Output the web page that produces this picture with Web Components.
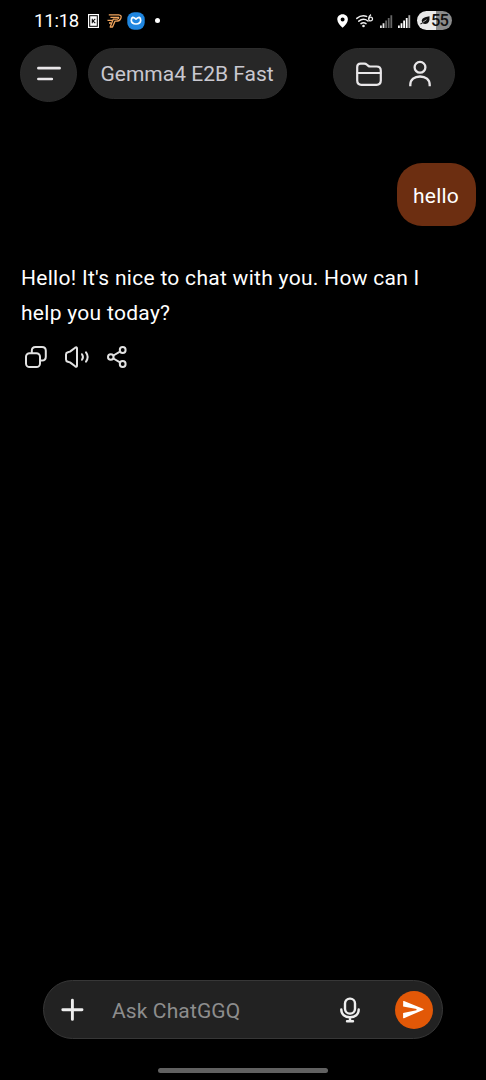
<!DOCTYPE html>
<html lang="en">
<head>
<meta charset="utf-8">
<title>Chat</title>
<style>
html,body{margin:0;background:#000}
body{width:486px;height:1080px;overflow:hidden;font-family:Roboto,"Noto Sans",sans-serif}
</style>
</head>
<body>
<chat-screen></chat-screen>
<script>
const define=(name,html)=>{
  const t=document.createElement('template');
  t.innerHTML=html;
  customElements.define(name,class extends HTMLElement{
    constructor(){super();this.attachShadow({mode:'open'}).append(t.content.cloneNode(true));}
  });
};

// Each icon: [width, height, markup]; colours come from currentColor.
const S='fill="none" stroke="currentColor" stroke-linecap="round" stroke-linejoin="round"';
const ICONS={
  menu:[24,16,`<path ${S} stroke-width="2.7" d="M1.4 2.2H22.6M1.4 13H14.8"/>`],
  folder:[26,24,`<g ${S} stroke-width="2.2"><path d="M1.2 11V5Q1.2 1.6 4.6 1.6H8.2Q9.8 1.6 11 2.7L12 3.6Q13 4.5 14.4 4.5H20.6Q24.8 4.5 24.8 8.7V18.6Q24.8 22.8 20.6 22.8H5.4Q1.2 22.8 1.2 18.6Z"/><path d="M1.5 11H24.5"/></g>`],
  user:[22,26,`<g ${S} stroke-width="2.3"><circle cx="11" cy="6.3" r="5.4"/><path stroke-linecap="butt" d="M1.3 25.3V23.8C1.3 18.7 5.4 15.5 11 15.5S20.7 18.7 20.7 23.8V25.3"/></g>`],
  copy:[22,22,`<g ${S} stroke-width="2"><rect x="1" y="7.2" width="14" height="13.8" rx="3.6"/><path d="M6.8 7V4.8Q6.8 1 10.6 1H17Q20.8 1 20.8 4.8V10.8Q20.8 14.6 17 14.6H15.3"/></g>`],
  sound:[24,22,`<g ${S} stroke-width="2"><path d="M1 8.4Q1 6.6 2.8 6.2L5 5.6 10.2 1.7Q12 .5 12 2.6V19.4Q12 21.5 10.2 20.3L5 16.4 2.8 15.8Q1 15.4 1 13.6Z"/><path d="M17 8.2Q18.9 11 17 13.8M21 6.4Q24.3 11 21 15.6"/></g>`],
  share:[20,22,`<g ${S} stroke-width="2"><circle cx="3.8" cy="11" r="2.8"/><circle cx="15.7" cy="4" r="2.9"/><circle cx="15.7" cy="18" r="2.9"/><path d="M6.4 9.5 13 5.7M6.4 12.5 13 16.3"/></g>`],
  plus:[22,22,`<path ${S} stroke-width="2.9" d="M11.4 1.2V20.4M1.8 10.8H21"/>`],
  mic:[20,26,`<g ${S} stroke-width="2.4"><rect x="5" y="1.6" width="10" height="15" rx="4.8"/><path d="M1.3 12.5C1.3 17.5 5 20.2 10 20.2S18.7 17.5 18.7 12.5M10 20.5V24M7 24.3H13"/></g>`],
  send:[22,20,`<path fill="currentColor" d="M1.2 1.8Q.8.6 2 1L21 8.8Q22.2 9.5 21 10.1L2 18.2Q.8 18.7 1.1 17.4V13L14.5 10.2V8.9L1.1 6.6Z"/>`],
  card:[12,14,`<rect x=".6" y=".6" width="9.8" height="12.8" fill="#000" stroke="#fff" stroke-width="1.2"/><rect x="2.2" y="2.2" width="6.6" height="9.6" fill="#fff"/><path fill="none" stroke="#111" stroke-width="1.1" d="M4.3 4.8V9.2M7.3 4.8 4.9 7 7.3 9.2"/>`],
  wing:[15,14,`<g fill="none" stroke="#f0a45c" stroke-width="1.3" stroke-linejoin="round"><path d="M1.8.8H11.6Q15.2 1.2 13.8 4.4 12.5 7.4 8.8 7.2H8L5.5 13H3.2L6.2 5.2H10.3Q11.8 4.8 11.7 3.4H3.4M.5 6.4H5M2 9H4"/></g>`],
  cat:[18,18,`<rect x=".3" y=".3" width="17.4" height="17.4" rx="7" fill="#1f86e0"/><path d="M5.8 5.4Q4.3 6 4.3 8.4 4.6 12 9 12T13.7 8.4Q13.7 6 12.2 5.4Q10.4 5.8 9 7.2 7.6 5.8 5.8 5.4Z" fill="none" stroke="#f7fcff" stroke-width="1.7" stroke-linejoin="round"/>`],
  pin:[12,14,`<path fill="#fff" fill-rule="evenodd" d="M5.6.3C2.3.3.3 2.6.3 5.4.3 8.5 3.2 11.4 5.6 13.8 8 11.4 10.9 8.5 10.9 5.4 10.9 2.6 8.9.3 5.6.3ZM5.6 3.5A2 2 0 1 1 5.6 7.5 2 2 0 0 1 5.6 3.5Z"/>`],
  wifi:[18,14,`<g fill="none" stroke="#eee" stroke-width="1.5" stroke-linecap="round"><path d="M.8 4.4Q5.5.4 10.6 2.4M2.8 7.2Q7.3 3.6 12 7M5 9.6Q7.5 7.8 10 9.6"/></g><circle cx="7.5" cy="12" r="1.3" fill="#eee"/><path d="M15 .6Q12.7 2 12.7 5" fill="none" stroke="#eee" stroke-width="1.3"/><circle cx="14.6" cy="5" r="1.9" fill="none" stroke="#eee" stroke-width="1.3"/>`],
  weak:[13,13,`<path fill="#e8e8e8" d="M0 10.5h1.8V13H0zM2.6 8.2h1.8V13H2.6z"/><path fill="#666" d="M5.2 5.5H7V13H5.2zM7.8 3H9.6V13H7.8zM10.4.2h1.8V13h-1.8z"/>`],
  strong:[13,13,`<path fill="#fff" d="M0 10.5h1.8V13H0zM2.6 8.2h1.8V13H2.6zM5.2 5.5H7V13H5.2zM7.8 3H9.6V13H7.8z"/><path fill="#aaa" d="M10.4.2h1.8V13h-1.8z"/>`],
  leaf:[10,9,`<path fill="#111" d="M9.5.3Q10.1 8 5.2 8 3.7 8 2.6 7.2L.8 8.6.1 7.8 2.2 6.4Q1 4.5 2.5 2.8 4.3 1 9.5.3Z"/><path stroke="#e8e8e8" stroke-width=".7" fill="none" d="M2.6 6.4 6.6 3.7"/>`]
};
customElements.define('ui-icon',class extends HTMLElement{
  connectedCallback(){
    if(this.shadowRoot)return;
    const [w,h,m]=ICONS[this.getAttribute('name')];
    this.attachShadow({mode:'open'}).innerHTML=
      `<style>:host{display:block;flex:none;width:${w}px;height:${h}px}svg{display:block;overflow:visible}</style><svg width="${w}" height="${h}" viewBox="0 0 ${w} ${h}" aria-hidden="true">${m}</svg>`;
  }
});

define('battery-pill',`<style>
:host{display:flex;align-items:center;box-sizing:border-box;width:35px;height:19px;border-radius:10px;padding-left:3px;gap:1px;background:linear-gradient(90deg,#e9e9e9 55%,#8b8b8b 55%);color:#111;font-size:16.5px;line-height:19px;letter-spacing:-.9px;font-weight:500}
</style><ui-icon name="leaf"></ui-icon><slot></slot>`);

define('status-bar',`<style>
:host{display:flex;align-items:center;height:41px;padding:0 34px 0 34px;box-sizing:border-box;color:#fff}
time{font-size:18.5px;font-weight:400;line-height:20px;width:54px;letter-spacing:-.2px}
.left,.right{display:flex;align-items:center}
.right{margin-left:auto}
.dot{width:5px;height:5px;border-radius:50%;background:#fff;margin-left:10px}
</style>
<div class="left"><time>11:18</time><ui-icon name="card"></ui-icon><ui-icon name="wing" style="margin-left:7px"></ui-icon><ui-icon name="cat" style="margin-left:5px"></ui-icon><span class="dot"></span></div>
<div class="right"><ui-icon name="pin"></ui-icon><ui-icon name="wifi" style="margin-left:7px"></ui-icon><ui-icon name="weak" style="margin:1px 0 0 6px"></ui-icon><ui-icon name="strong" style="margin:1px 0 0 5px"></ui-icon><battery-pill style="margin-left:6px">55</battery-pill></div>`);

define('top-bar',`<style>
:host{display:flex;align-items:center;height:65px;padding:0 31px 0 20px;color:#e9e7e9}
.menu,.model,.tools{box-sizing:border-box;background:#272727;border:1px solid #2c2c2c;display:flex;align-items:center}
.menu{width:57px;height:57px;border-radius:50%;justify-content:center}
.model{width:199px;height:51px;border-radius:26px;margin-left:11px;padding-left:11.5px;color:#c9c8d0;font-size:21px;letter-spacing:0;white-space:nowrap}
.tools{width:122px;height:51px;border-radius:26px;margin-left:auto;padding:0 0 0 22px;gap:26.5px}
</style>
<div class="menu"><ui-icon name="menu"></ui-icon></div>
<div class="model"><slot></slot></div>
<div class="tools"><ui-icon name="folder"></ui-icon><ui-icon name="user"></ui-icon></div>`);

define('user-bubble',`<style>
:host{display:block;box-sizing:border-box;width:79px;height:63px;margin:57px 10.5px 0 auto;border-radius:25px;background:#6c2e11;color:#fff;text-align:center;font-size:21px;line-height:67px;letter-spacing:.2px}
</style><slot></slot>`);

define('assistant-reply',`<style>
:host{display:block;margin:35px 20px 0 21px;color:#fff}
p{margin:0;font-size:21px;line-height:35px;letter-spacing:.29px}
.actions{display:flex;align-items:center;margin:15px 0 0 4px;color:#e2e2e2}
</style><p><slot></slot></p>
<div class="actions"><ui-icon name="copy"></ui-icon><ui-icon name="sound" style="margin-left:18px"></ui-icon><ui-icon name="share" style="margin-left:18px"></ui-icon></div>`);

define('chat-composer',`<style>
:host{display:flex;align-items:center;box-sizing:border-box;width:400px;height:59px;margin:auto 0 0 43px;padding:0 9px 0 17px;border:1px solid #373737;border-radius:30px;background:#222;color:#eee}
.hint{flex:1;margin-left:29px;color:#8d8d8d;font-size:21px;letter-spacing:.12px;padding-top:2px}
.send{display:flex;align-items:center;justify-content:center;width:38px;height:38px;border-radius:50%;background:#e25807;color:#fff;margin-left:35px}
</style><ui-icon name="plus"></ui-icon><span class="hint"><slot></slot></span><ui-icon name="mic"></ui-icon><span class="send"><ui-icon name="send" style="margin-right:2px"></ui-icon></span>`);

define('chat-screen',`<style>
:host{display:flex;flex-direction:column;width:486px;height:1080px;background:#000}
.home{width:170px;height:5px;border-radius:3px;background:#616161;margin:29px 0 7px 158px;flex:none}
</style>
<status-bar></status-bar>
<top-bar>Gemma4 E2B Fast</top-bar>
<user-bubble>hello</user-bubble>
<assistant-reply>Hello! It's nice to chat with you. How can I<br>help you today?</assistant-reply>
<chat-composer>Ask ChatGGQ</chat-composer>
<div class="home"></div>`);
</script>
</body>
</html>
